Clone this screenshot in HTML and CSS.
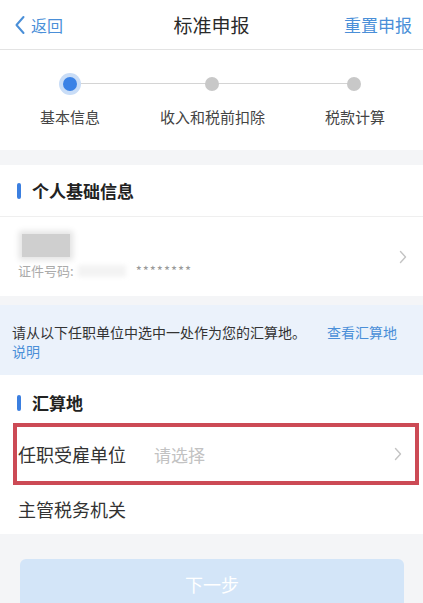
FILE: index.html
```html
<!DOCTYPE html>
<html lang="zh-CN">
<head>
<meta charset="utf-8">
<link rel="stylesheet" href="styles.css">
</head>
<body>
<div class="page">
  <header class="nav">
    <div class="back">
      <svg class="back-icon" width="12" height="20" viewBox="0 0 12 20"><path d="M9.5 2 L2.5 10 L9.5 18" fill="none" stroke="#4a8fd8" stroke-width="2" stroke-linecap="round" stroke-linejoin="round"/></svg>
      <span>返回</span>
    </div>
    <div class="title">标准申报</div>
    <div class="reset">重置申报</div>
  </header>

  <section class="steps">
    <div class="track">
      <span class="line"></span>
      <span class="dot active"></span>
      <span class="dot"></span>
      <span class="dot"></span>
    </div>
    <div class="labels">
      <span>基本信息</span>
      <span>收入和税前扣除</span>
      <span>税款计算</span>
    </div>
  </section>

  <div class="band"></div>

  <section class="card">
    <h2 class="sec-head"><span class="bar"></span>个人基础信息</h2>
    <div class="person">
      <div class="person-info">
        <div class="name-blur"></div>
        <div class="id-line"><span class="id-label">证件号码:</span><span class="id-blur"></span><span class="stars">********</span></div>
      </div>
      <svg class="chev" width="8" height="14" viewBox="0 0 8 14"><path d="M1.5 1.5 L6.5 7 L1.5 12.5" fill="none" stroke="#c4c4c4" stroke-width="1.4" stroke-linecap="round" stroke-linejoin="round"/></svg>
    </div>
  </section>

  <div class="info-wrap">
    <div class="info">
      <span class="info-line">请从以下任职单位中选中一处作为您的汇算地。<a class="link">查看汇算地</a></span>
      <a class="link">说明</a>
    </div>
  </div>

  <section class="card">
    <h2 class="sec-head small"><span class="bar"></span>汇算地</h2>
    <div class="row highlight">
      <span class="row-label">任职受雇单位</span>
      <span class="placeholder">请选择</span>
      <svg class="chev" width="8" height="14" viewBox="0 0 8 14"><path d="M1.5 1.5 L6.5 7 L1.5 12.5" fill="none" stroke="#c4c4c4" stroke-width="1.4" stroke-linecap="round" stroke-linejoin="round"/></svg>
    </div>
    <div class="row plain">
      <span class="row-label">主管税务机关</span>
    </div>
  </section>

  <footer class="foot">
    <button class="next">下一步</button>
  </footer>
</div>
</body>
</html>
```

FILE: styles.css
```css
html, body {
  margin: 0;
  padding: 0;
  background: #f4f5f7;
}
body {
  font-family: "Noto Sans CJK SC", "Noto Sans", sans-serif;
  color: #333;
}
.page {
  width: 423px;
  height: 603px;
  overflow: hidden;
  display: flex;
  flex-direction: column;
}
.page > * {
  flex: none;
}
.nav {
  height: 49px;
  background: #fff;
  border-bottom: 1px solid #e3e3e3;
  display: flex;
  align-items: center;
  justify-content: space-between;
  padding: 0 11px 0 14px;
  position: relative;
}
.back {
  display: flex;
  align-items: center;
  gap: 5px;
  color: #4a8fd8;
  font-size: 16px;
}
.title {
  position: absolute;
  left: 0;
  right: 0;
  text-align: center;
  font-size: 19px;
  color: #2a2a2a;
  pointer-events: none;
}
.reset {
  color: #4a8fd8;
  font-size: 17px;
}
.steps {
  background: #fff;
  height: 100px;
}
.track {
  position: relative;
  height: 20px;
  margin-top: 24px;
  display: flex;
  justify-content: space-between;
  padding: 0 62px 0 63px;
  align-items: center;
}
.line {
  position: absolute;
  left: 70px;
  right: 69px;
  top: 9px;
  height: 1px;
  background: #d4d4d4;
}
.dot {
  position: relative;
  width: 14px;
  height: 14px;
  border-radius: 50%;
  background: #c8c8c8;
}
.dot.active {
  background: #3a82e6;
  box-shadow: 0 0 0 4px #c9ddf7;
}
.labels {
  display: flex;
  justify-content: space-between;
  padding: 0 38px 0 40px;
  margin-top: 12px;
  font-size: 15px;
  color: #444;
  line-height: 22px;
}
.band {
  height: 15px;
}
.card {
  background: #fff;
}
.sec-head {
  margin: 0;
  height: 51px;
  border-bottom: 1px solid #efefef;
  display: flex;
  align-items: center;
  padding-left: 17px;
  font-size: 17px;
  font-weight: bold;
  color: #222;
}
.sec-head.small {
  height: 48px;
  border-bottom: none;
  padding-top: 7px;
  box-sizing: border-box;
}
.bar {
  width: 4px;
  height: 16px;
  border-radius: 2px;
  background: #3b7fe0;
  margin-right: 11px;
}
.person {
  height: 79px;
  display: flex;
  align-items: center;
  justify-content: space-between;
  padding: 0 16px 0 18px;
}
.person-info {
  display: flex;
  flex-direction: column;
  gap: 5px;
  margin-top: 0;
}
.name-blur {
  width: 48px;
  height: 23px;
  margin-left: 4px;
  background: #cfcfcf;
  box-shadow: 0 0 6px 3px #e3e3e3;
}
.id-line {
  display: flex;
  align-items: center;
  font-size: 13px;
  color: #aaa;
  line-height: 18px;
}
.id-blur {
  width: 48px;
  height: 12px;
  margin: 0 10px 0 4px;
  background: #f3f3f3;
  filter: blur(2px);
}
.stars {
  font-size: 13px;
  letter-spacing: 1px;
  color: #999;
}
.chev {
  flex: none;
}
.info-wrap {
  padding-top: 9px;
}
.info {
  background: #ebf2fb;
  padding: 18px 14px 13px 12px;
  font-size: 14px;
  line-height: 19px;
  color: #333;
  height: 70px;
  box-sizing: border-box;
  display: flex;
  flex-direction: column;
  align-items: flex-start;
}
.info-line {
  white-space: nowrap;
}
.link {
  color: #4a8fd8;
}
.info-line .link {
  margin-left: 21px;
}
.row {
  display: flex;
  align-items: center;
}
.row-label {
  font-size: 18px;
  color: #333;
}
.highlight {
  height: 62px;
  box-sizing: border-box;
  margin: 0 4px 0 13px;
  border: 4px solid #cc4a55;
  padding: 0 13px 0 1px;
}
.placeholder {
  margin-left: 28px;
  font-size: 17px;
  color: #c2c2c2;
  flex: 1;
}
.plain {
  height: 47px;
  padding-left: 18px;
  padding-bottom: 2px;
}
.foot {
  flex: 1 0 auto;
  padding: 25px 19px 0 20px;
}
.next {
  width: 100%;
  height: 56px;
  border: none;
  border-radius: 6px;
  background: #d3e5f8;
  color: #fff;
  font-family: inherit;
  font-size: 18px;
  padding: 0 0 6px;
}
```
